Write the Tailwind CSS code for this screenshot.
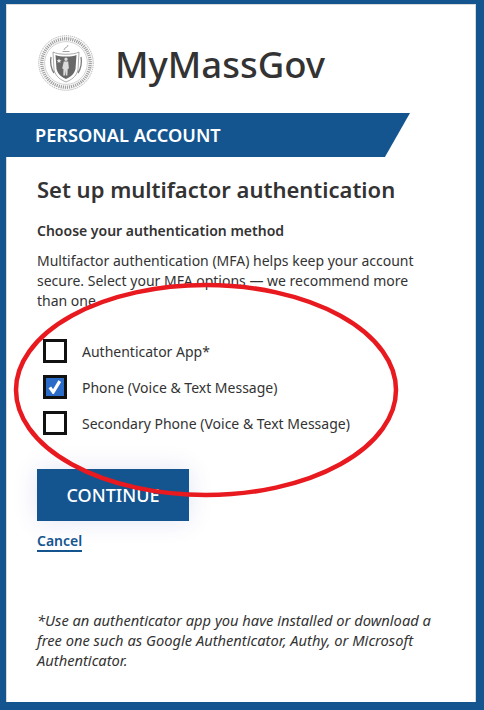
<!DOCTYPE html>
<html lang="en">
<head>
    <meta charset="UTF-8">
    <title>MyMassGov</title>
    <script src="https://cdn.jsdelivr.net/npm/@tailwindcss/browser@4"></script>
</head>
<body class="bg-[#14558f] font-['Noto_Sans',sans-serif] text-[#333333]">
    <div class="relative h-[710px] w-[484px] overflow-hidden pt-1 pl-1.5 pr-2 pb-2">
        <div class="h-[698px] w-[470px] border-t border-l border-r border-[#d9d9d9] bg-white">
            <header class="flex h-[108px] items-center pl-[31px] pt-[8px]">
                <svg class="h-[56px] w-[56px] shrink-0" viewBox="0 0 56 56" fill="none">
                    <circle cx="28" cy="28" r="27.2" stroke="#999999" stroke-width="0.8" stroke-dasharray="1.2 0.8"/>
                    <circle cx="28" cy="28" r="24.2" stroke="#808080" stroke-width="3.4" stroke-dasharray="1.2 0.9" opacity="0.75"/>
                    <circle cx="28" cy="28" r="21.4" stroke="#b4b4b4" stroke-width="0.6"/>
                    <path d="M15 17 C20 20 36 20 41 17 L40 35 C38 42 33 45 28 47 C23 45 18 42 16 35 Z" fill="#fff" stroke="#888" stroke-width="0.7"/>
                    <path d="M17.5 20 C22 22 34 22 38.5 20 L37.5 34 C36 40 32 42 28 44 C24 42 20 40 18.5 34 Z" fill="#686868"/>
                    <path d="M21 23.5l.7 1.6 1.7.1-1.3 1.1.4 1.7-1.5-.9-1.5.9.4-1.7-1.3-1.1 1.7-.1z" fill="#e6e6e6"/>
                    <path d="M28 22.5a1.7 1.7 0 1 1 0 3.4a1.7 1.7 0 1 1 0-3.4zM25.8 26.6h4.4l.7 7-1.2.3-.3 6.6h-1.6l-.1-5-.8 5h-1.6l.1-6.6-1.2-.3z" fill="#dcdcdc"/>
                    <path d="M13 22c-1 5 0 12 3 16M43 22c1 5 0 12-3 16" stroke="#7c7c7c" stroke-width="1.3"/>
                    <path d="M26 15c0-2.5 4-2.5 4-5M24.5 16.5h7" stroke="#999" stroke-width="0.9"/>
                </svg>
                <h1 class="mt-[2px] ml-[21px] text-[36.5px] leading-[46px] font-medium text-[#333333]">MyMassGov</h1>
            </header>
            <div class="-ml-px flex h-[44px] w-[404px] items-center bg-[#14558f] pt-[1px] pl-[29px] [clip-path:polygon(0_0,100%_0,93.8%_100%,0_100%)]">
                <span class="text-[18.2px] font-semibold text-white">PERSONAL ACCOUNT</span>
            </div>
            <main class="pl-[30px] pr-[50px]">
                <h2 class="mt-[18px] text-[22px] leading-[28px] font-semibold">Set up multifactor authentication</h2>
                <p class="mt-[18px] text-[14px] leading-[20px] font-semibold">Choose your authentication method</p>
                <p class="mt-[10px] text-[14px] leading-[20px]">Multifactor authentication (MFA) helps keep your account secure. Select your MFA options — we recommend more than one</p>
                <div class="mt-[28px] flex flex-col gap-[12px] pl-[6px]">
                    <label class="flex h-[24px] items-center gap-[15px] text-[14px]">
                        <span class="h-[24px] w-[24px] border-[3px] border-[#111] bg-white"></span>
                        Authenticator App*
                    </label>
                    <label class="flex h-[24px] items-center gap-[15px] text-[14px]">
                        <span class="flex h-[24px] w-[24px] items-center justify-center border-[3px] border-[#111] bg-[#2c6cc9]">
                            <svg class="h-[14px] w-[14px]" viewBox="0 0 14 14" fill="none"><path d="M1.8 7.4 L5.2 12 L11.8 1.2" stroke="#fff" stroke-width="3.2"/></svg>
                        </span>
                        Phone (Voice &amp; Text Message)
                    </label>
                    <label class="flex h-[24px] items-center gap-[15px] text-[14px]">
                        <span class="h-[24px] w-[24px] border-[3px] border-[#111] bg-white"></span>
                        Secondary Phone (Voice &amp; Text Message)
                    </label>
                </div>
                <button class="mt-[34px] block h-[52px] w-[152px] bg-[#14558f] text-[18px] font-medium text-white shadow-[0_0_24px_rgba(60,70,180,0.14)]">CONTINUE</button>
                <a href="#" class="mt-[10px] inline-block border-b-2 border-[#14558f] text-[14px] leading-[19px] font-semibold text-[#14558f]">Cancel</a>
                <p class="mt-[58px] -mr-[10px] text-[14.7px] leading-[20px] italic">*Use an authenticator app you have installed or download a free one such as Google Authenticator, Authy, or Microsoft Authenticator.</p>
            </main>
        </div>
        <!-- hand drawn annotation over the form -->
        <svg class="pointer-events-none absolute top-0 left-0" width="484" height="710" viewBox="0 0 484 710" fill="none">
            <ellipse cx="206" cy="390" rx="190" ry="105" stroke="#e8191f" stroke-width="4.5"/>
        </svg>
    </div>
</body>
</html>
